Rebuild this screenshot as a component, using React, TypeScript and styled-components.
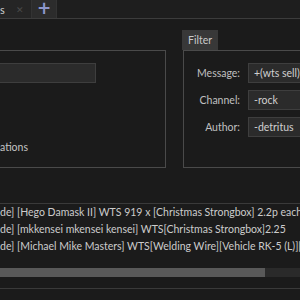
import React from "react";
import styled, { createGlobalStyle } from "styled-components";

const Global = createGlobalStyle`
  *, *::before, *::after { box-sizing: border-box; }
  html, body { margin: 0; padding: 0; background: #1b1b1b; }
  body { width: 300px; height: 300px; overflow: hidden; font-family: Lato, "Noto Sans", sans-serif; font-size: 10.5px; color: #c8c8c8; }
`;

const Page = styled.div`
  width: 300px;
  height: 300px;
  display: flex;
  flex-direction: column;
  background: #1b1b1b;
  overflow: hidden;
`;

const TabBar = styled.div`
  height: 19px;
  flex: none;
  display: flex;
  background: #1e1e1e;
  border-bottom: 1px solid #3c3c3c;
`;

const Tab = styled.div<{ $w: number; $bg: string }>`
  width: ${(p) => p.$w}px;
  display: flex;
  align-items: center;
  background: ${(p) => p.$bg};
  border-right: 1px solid #333;
  color: #cfcfcf;
  font-size: 11px;
`;

const TabClose = styled.span`
  color: #4a4a4a;
  font-size: 9px;
  margin-left: 11px;
`;

const Plus = styled.div`
  margin: 0 auto;
  color: #8e97cc;
  font-family: "DejaVu Sans", sans-serif;
  font-weight: bold;
  font-size: 17px;
  line-height: 1;
  margin-top: -1px;
`;

const Toolbar = styled.div`
  height: 11px;
  flex: none;
`;

const Panels = styled.div`
  display: flex;
  align-items: flex-end;
  gap: 17px;
  flex: none;
`;

const LeftGroup = styled.div`
  width: 166px;
  flex: none;
  height: 118px;
  border: 1px solid #4a4a4a;
  border-left: none;
  display: flex;
  flex-direction: column;
  padding-top: 12px;
`;

const Field = styled.div<{ $w?: number }>`
  height: 20px;
  width: ${(p) => (p.$w ? `${p.$w}px` : "auto")};
  background: #2b2b2b;
  border: 1px solid #3e3e3e;
  border-left: ${(p) => (p.$w ? "none" : "1px solid #3e3e3e")};
  display: flex;
  align-items: center;
  padding-left: 5px;
  color: #d0d0d0;
  font-size: 10.5px;
  white-space: nowrap;
  overflow: hidden;
`;

const CheckText = styled.div`
  margin-top: 56px;
  line-height: 16px;
  font-size: 10.5px;
  color: #c4c4c4;
`;

const FilterCol = styled.div`
  width: 160px;
  flex: none;
  display: flex;
  flex-direction: column;
`;

const FilterTab = styled.div`
  width: 36px;
  height: 20px;
  background: #383838;
  color: #c9c9c9;
  font-size: 10.5px;
  display: flex;
  align-items: center;
  justify-content: center;
  margin-left: -1px;
`;

const FilterBox = styled.div`
  height: 118px;
  border: 1px solid #4a4a4a;
  border-right: none;
  display: grid;
  grid-template-columns: 56px 1fr;
  column-gap: 8px;
  row-gap: 7px;
  align-content: start;
  padding-top: 12px;
`;

const Label = styled.div`
  text-align: right;
  align-self: center;
  font-size: 10.5px;
  color: #c0c0c0;
`;

const Gap = styled.div`
  height: 35px;
  flex: none;
`;

const List = styled.div`
  border-top: 1px solid #3a3a3a;
  border-bottom: 1px solid #3a3a3a;
  display: flex;
  flex-direction: column;
  height: 86px;
  flex: none;
`;

const Row = styled.div`
  height: 17px;
  line-height: 17px;
  white-space: nowrap;
  font-size: 10.5px;
  color: #cccccc;
`;

const Scroll = styled.div`
  margin-top: 13px;
  height: 9px;
  background: #2a2a2a;
  display: flex;
`;

const Thumb = styled.div`
  background: #595959;
`;

export default function App() {
  return (
    <Page>
      <Global />
      <TabBar>
        <Tab $w={32} $bg="#252525">
          s<TabClose>✕</TabClose>
        </Tab>
        <Tab $w={25} $bg="#2c2c2c">
          <Plus>+</Plus>
        </Tab>
      </TabBar>
      <Toolbar />
      <Panels>
        <LeftGroup>
          <Field $w={96} />
          <CheckText>ations</CheckText>
        </LeftGroup>
        <FilterCol>
          <FilterTab>Filter</FilterTab>
          <FilterBox>
            <Label>Message:</Label>
            <Field>+(wts sell)</Field>
            <Label>Channel:</Label>
            <Field>-rock</Field>
            <Label>Author:</Label>
            <Field>-detritus</Field>
          </FilterBox>
        </FilterCol>
      </Panels>
      <Gap />
      <List>
        <Row>de] [Hego Damask II] WTS 919 x [Christmas Strongbox] 2.2p each</Row>
        <Row>de] [mkkensei mkensei kensei] WTS[Christmas Strongbox]2.25</Row>
        <Row>de] [Michael Mike Masters] WTS[Welding Wire][Vehicle RK-5 (L)][</Row>
        <Scroll>
          <Thumb style={{ width: 265 }} />
        </Scroll>
      </List>
    </Page>
  );
}
